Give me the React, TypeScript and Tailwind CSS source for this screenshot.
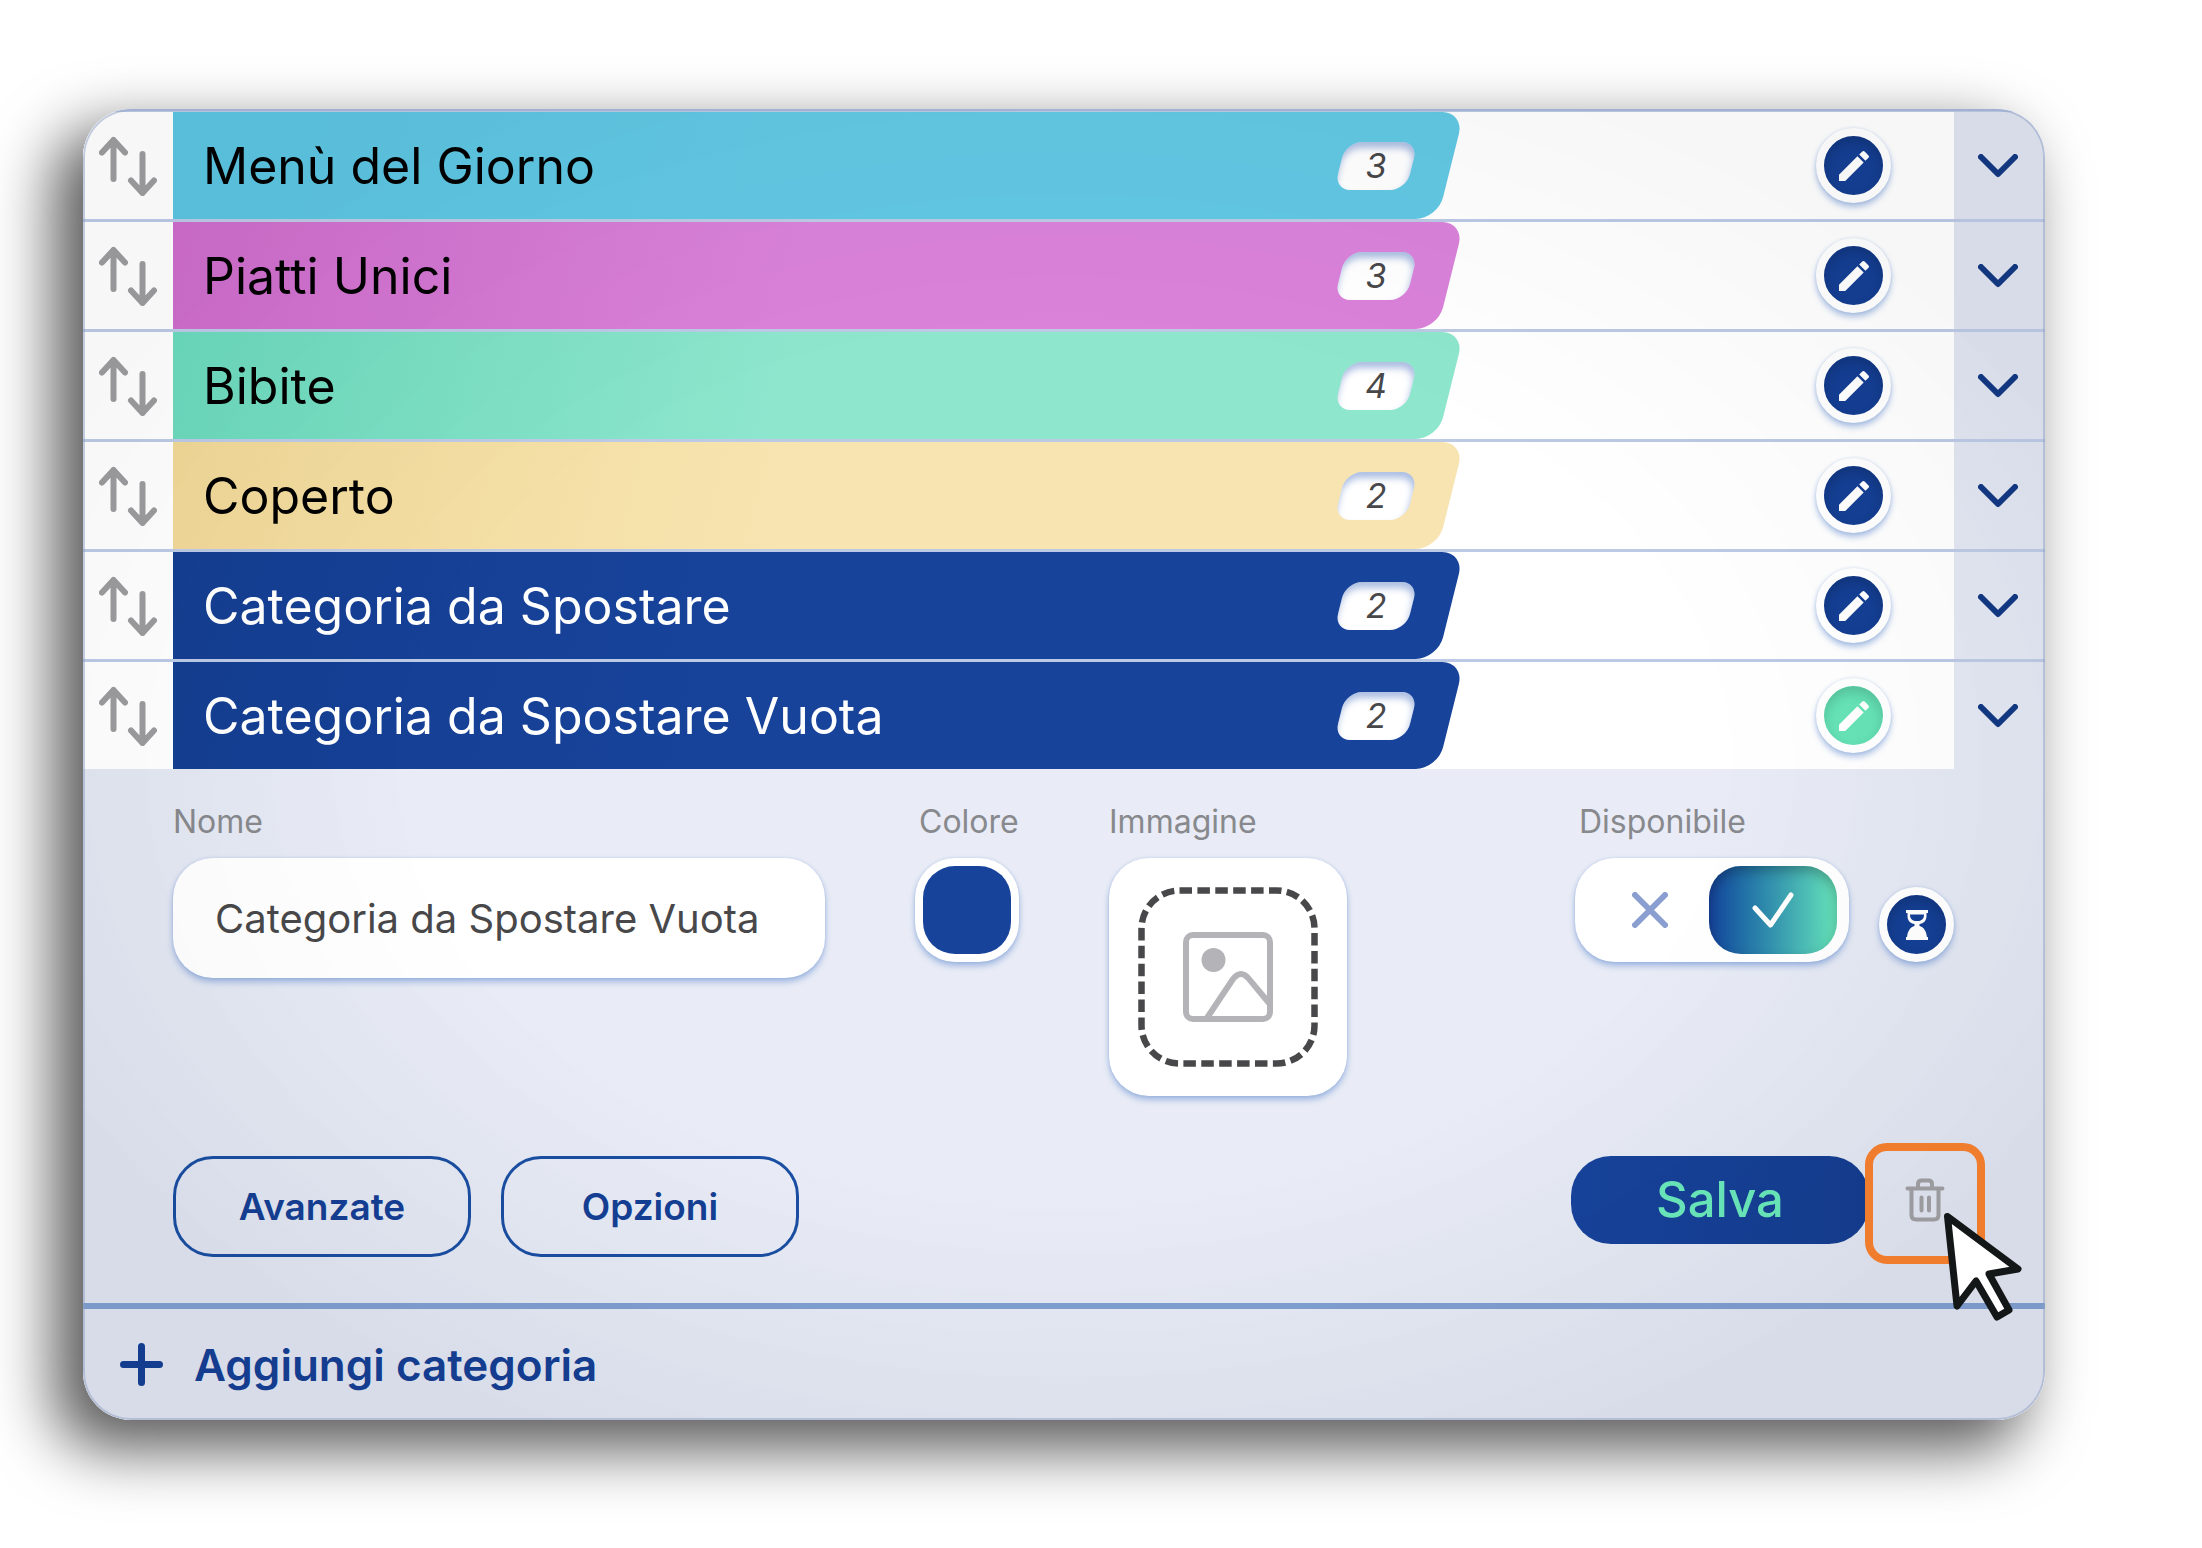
import { useState } from "react";
import { MdEdit } from "react-icons/md";

const CATEGORIES = [
  { name: "Menù del Giorno", count: 3, bar: "from-[#5ac4e1] to-[#62c8e4]", text: "text-black" },
  { name: "Piatti Unici", count: 3, bar: "from-[#cd6ccb] to-[#da82da]", text: "text-black" },
  { name: "Bibite", count: 4, bar: "from-[#69d9bc] to-[#8ee6cd]", text: "text-black" },
  { name: "Coperto", count: 2, bar: "from-[#f0d896] to-[#f7e4b0]", text: "text-black" },
  { name: "Categoria da Spostare", count: 2, bar: "from-[#153e91] to-[#17439b]", text: "text-white" },
  { name: "Categoria da Spostare Vuota", count: 2, bar: "from-[#153e91] to-[#17439b]", text: "text-white" },
];

const RAISED = "shadow-[0_4px_6px_rgba(70,120,200,0.45),0_0_3px_rgba(70,120,200,0.2)]";
const LABEL = "block h-9 text-[32px] leading-10 text-[#88898d]";

function SortIcon() {
  return (
    <svg
      viewBox="0 0 58 60"
      fill="none"
      stroke="#9c9c9f"
      strokeWidth={6}
      strokeLinecap="round"
      strokeLinejoin="round"
      className="h-[60px] w-[58px]"
      aria-hidden
    >
      <path d="M14.5 43V4M3 16.500 14.500 4 26 16.500M43.500 18v39M32 44.500 43.500 57 55 44.500" />
    </svg>
  );
}

function ChevronIcon() {
  return (
    <svg
      viewBox="0 0 40 24"
      fill="none"
      stroke="#133984"
      strokeWidth={6}
      strokeLinecap="round"
      strokeLinejoin="round"
      className="h-6 w-10"
      aria-hidden
    >
      <path d="M3 3l17 17L37 3" />
    </svg>
  );
}

function HourglassIcon() {
  return (
    <svg viewBox="0 0 22 30" fill="#fff" className="h-[30px] w-[22px]" aria-hidden>
      <path d="M0 0h22v3H0zM0 27h22v3H0z" />
      <path
        fillRule="evenodd"
        d="M1.500 2h19v4c0 5-3 7.500-7 8v2c4 1 7 5 7.500 11.500H1C1.500 21 4.500 17 8.500 16v-2c-4-.5-7-3-7-8V2zm2.500 2.500C4 8.500 6 10.500 9 11h4c3-.5 5-2.500 5-6.500H4z"
      />
    </svg>
  );
}

function ImageIcon() {
  return (
    <svg
      viewBox="0 0 90 90"
      fill="none"
      stroke="#b3b3b8"
      strokeWidth={6}
      className="col-start-1 row-start-1 size-[90px]"
      aria-hidden
    >
      <rect x={3} y={3} width={84} height={84} rx={7} />
      <circle cx={30.500} cy={28} r={12} fill="#b3b3b8" stroke="none" />
      <path d="M24 86 50 47q8-10 16 0l20 24" />
    </svg>
  );
}

function TrashIcon() {
  return (
    <svg
      viewBox="0 0 40 44"
      fill="none"
      stroke="#a0a0a4"
      strokeWidth={4}
      strokeLinecap="round"
      strokeLinejoin="round"
      className="h-11 w-10"
      aria-hidden
    >
      <path d="M2.500 10.500h35M6.500 10.500V37q0 4.500 4.500 4.500h18q4.500 0 4.500-4.500V10.500M13 10V6q0-3.500 3.500-3.500h7Q27 2.500 27 6v4M16.500 19.500v13M24 19.500v13" />
    </svg>
  );
}

function PointerIcon() {
  return (
    <svg
      viewBox="0 0 80 110"
      className="pointer-events-none absolute top-[57px] left-[71px] z-20 h-[110px] w-20"
      aria-hidden
    >
      <path
        d="M3.500 3.500 74 56 45 61 65 97 53 104 32 68 13 93Z"
        fill="#fff"
        stroke="#131717"
        strokeWidth={7}
        strokeLinejoin="round"
      />
    </svg>
  );
}

function CategoryRow({
  category,
  editing,
  onEdit,
}: {
  category: (typeof CATEGORIES)[number];
  editing: boolean;
  onEdit: () => void;
}) {
  return (
    <li className="flex h-[110px] border-t-3 border-[#bccae6]">
      <button
        type="button"
        aria-label={`Sposta ${category.name}`}
        className="flex w-[90px] shrink-0 items-center justify-center bg-white"
      >
        <SortIcon />
      </button>
      <div className="grid w-[1290px] min-w-0 shrink items-center overflow-hidden bg-white">
        <span
          className={
            "col-start-1 row-start-1 mr-3 -ml-10 h-full -skew-x-[14deg] rounded-[22px] bg-linear-to-r to-50% " +
            category.bar
          }
        />
        <div
          className={
            "z-10 col-start-1 row-start-1 flex items-center justify-between pr-12 pl-[30px] " +
            category.text
          }
        >
          <h2 className="truncate text-[50px] leading-[64px]">{category.name}</h2>
          <span className="grid h-12 w-[78px] shrink-0 place-items-center">
            <span className="col-start-1 row-start-1 h-full w-[72px] -skew-x-[14deg] rounded-[16px] bg-white shadow-[inset_0_6px_7px_rgba(70,110,190,0.45)]" />
            <span className="z-10 col-start-1 row-start-1 text-[34px] leading-9 text-[#48484a] italic">
              {category.count}
            </span>
          </span>
        </div>
      </div>
      <div className="flex flex-1 items-center justify-end bg-white pr-[63px]">
        <button
          type="button"
          aria-label={`Modifica ${category.name}`}
          onClick={onEdit}
          className={
            "flex size-[75px] items-center justify-center rounded-full border-8 border-white text-white inset-shadow-[0_6px_12px_rgba(0,0,0,0.15)] " +
            RAISED +
            (editing ? " bg-[#66e3b7]" : " bg-[#153f94]")
          }
        >
          <MdEdit className="size-10" />
        </button>
      </div>
      <button
        type="button"
        aria-label={`Espandi ${category.name}`}
        className="flex w-[91px] shrink-0 items-center justify-center pr-1"
      >
        <ChevronIcon />
      </button>
    </li>
  );
}

export default function App() {
  const [editingIndex, setEditingIndex] = useState(5);
  const [name, setName] = useState("Categoria da Spostare Vuota");
  const [color, setColor] = useState("#17439b");
  const [available, setAvailable] = useState(true);

  return (
    <main className="min-h-screen bg-white pt-[109px] pr-[157px] pb-32 pl-[83px] font-['Inter',sans-serif]">
      <section className="relative overflow-hidden rounded-[48px] bg-[radial-gradient(ellipse_at_center,#e9ecf6_46%,#dfe4f0_82%)] shadow-[-25px_25px_62px_4px_rgba(0,0,0,0.65)]">
        <ul>
          {CATEGORIES.map((category, index) => (
            <CategoryRow
              key={category.name}
              category={category}
              editing={index === editingIndex}
              onEdit={() => setEditingIndex(index)}
            />
          ))}
        </ul>

        <form onSubmit={(e) => e.preventDefault()}>
          <div className="flex items-start gap-[90px] pt-[33px] pr-[91px] pl-[90px]">
            <div className="w-[652px] min-w-0">
              <label htmlFor="nome" className={LABEL}>
                Nome
              </label>
              <input
                id="nome"
                type="text"
                value={name}
                onChange={(e) => setName(e.target.value)}
                className={
                  "mt-5 h-[120px] w-full rounded-[40px] bg-white px-[42px] text-[40px] text-[#48484a] outline-none " +
                  RAISED
                }
              />
            </div>
            <div className="w-[104px] shrink-0">
              <label htmlFor="colore" className={LABEL + " pl-1"}>
                Colore
              </label>
              <input
                id="colore"
                type="color"
                value={color}
                onChange={(e) => setColor(e.target.value)}
                className={
                  "mt-5 block size-[104px] appearance-none rounded-[40px] bg-white p-2 [&::-webkit-color-swatch]:rounded-[32px] [&::-webkit-color-swatch]:border-0 [&::-webkit-color-swatch-wrapper]:p-0 " +
                  RAISED
                }
              />
            </div>
            <div className="shrink-0">
              <label htmlFor="immagine" className={LABEL}>
                Immagine
              </label>
              <button
                id="immagine"
                type="button"
                className={
                  "mt-5 grid size-[238px] place-items-center rounded-[40px] bg-white " + RAISED
                }
              >
                <svg
                  viewBox="0 0 180 180"
                  className="col-start-1 row-start-1 size-[180px]"
                  aria-hidden
                >
                  <rect
                    x={3.500}
                    y={3.500}
                    width={173}
                    height={173}
                    rx={38}
                    fill="none"
                    stroke="#48484a"
                    strokeWidth={6.500}
                    strokeDasharray="12.500 5.400"
                  />
                </svg>
                <ImageIcon />
              </button>
            </div>
            <div className="ml-auto flex shrink-0 items-end gap-[30px]">
              <fieldset>
                <legend className={LABEL + " pl-1"}>Disponibile</legend>
                <div
                  className={
                    "mt-5 flex h-[104px] w-[274px] items-center rounded-[40px] bg-white pr-3 " +
                    RAISED
                  }
                >
                  <label className="flex h-full flex-1 items-center justify-center pl-4">
                    <input
                      type="radio"
                      name="disponibile"
                      aria-label="Non disponibile"
                      checked={!available}
                      onChange={() => setAvailable(false)}
                      className="sr-only"
                    />
                    <svg
                      viewBox="0 0 36 36"
                      stroke="#8a9fd0"
                      strokeWidth={6}
                      strokeLinecap="round"
                      className="size-9"
                      aria-hidden
                    >
                      <path d="M3 3l30 30M33 3 3 33" />
                    </svg>
                  </label>
                  <label className="flex h-[88px] w-32 items-center justify-center rounded-[32px] bg-linear-to-r from-[#17439b] to-[#68e6ba] inset-shadow-[0_6px_12px_rgba(0,0,0,0.25)]">
                    <input
                      type="radio"
                      name="disponibile"
                      aria-label="Disponibile"
                      checked={available}
                      onChange={() => setAvailable(true)}
                      className="sr-only"
                    />
                    <svg
                      viewBox="0 0 42 36"
                      fill="none"
                      stroke="#fff"
                      strokeWidth={5}
                      strokeLinecap="round"
                      strokeLinejoin="round"
                      className="h-9 w-[42px]"
                      aria-hidden
                    >
                      <path d="M3 16l15.500 17L39 3" />
                    </svg>
                  </label>
                </div>
              </fieldset>
              <button
                type="button"
                aria-label="Disponibilità temporanea"
                className={
                  "flex size-[75px] items-center justify-center rounded-full border-8 border-white bg-[#153f94] inset-shadow-[0_6px_12px_rgba(0,0,0,0.15)] " +
                  RAISED
                }
              >
                <HourglassIcon />
              </button>
            </div>
          </div>

          <div className="flex items-start gap-[30px] pt-[60px] pr-[68px] pb-[46px] pl-[90px] text-[37px] font-semibold text-[#153f94]">
            <button
              type="button"
              className="h-[101px] w-[298px] rounded-[40px] border-3 border-[#1a4ea2]"
            >
              Avanzate
            </button>
            <button
              type="button"
              className="h-[101px] w-[298px] rounded-[40px] border-3 border-[#1a4ea2]"
            >
              Opzioni
            </button>
            <div className="ml-auto flex gap-1">
              <button
                type="submit"
                className="h-[88px] w-[298px] rounded-[40px] bg-linear-to-r from-[#17439b] to-[#153d8f] text-[49px] font-medium text-[#6ae6ba]"
              >
                Salva
              </button>
              <button
                type="button"
                aria-label="Elimina categoria"
                className="relative flex h-[88px] w-[104px] items-center justify-center"
              >
                <TrashIcon />
                <span className="absolute -inset-x-2 -top-[13px] -bottom-5 z-20 rounded-[22px] border-8 border-[#f07c2e]" />
                <PointerIcon />
              </button>
            </div>
          </div>
        </form>

        <button
          type="button"
          className="flex h-[117px] w-full items-center gap-[31px] border-t-6 border-[#7f9fd1] pl-[37px] text-[44px] font-semibold text-[#153f94]"
        >
          <svg
            viewBox="0 0 43 43"
            stroke="#153f94"
            strokeWidth={7}
            strokeLinecap="round"
            className="size-[43px]"
            aria-hidden
          >
            <path d="M21.500 3.500v36M3.500 21.500h36" />
          </svg>
          Aggiungi categoria
        </button>

        {/* soft vignette over the whole card */}
        <div className="pointer-events-none absolute inset-0 z-10 rounded-[48px] border-2 border-[#8d9fc4]/50 bg-[radial-gradient(ellipse_at_center,transparent_46%,rgba(0,0,0,0.03)_82%)]" />
      </section>
    </main>
  );
}
